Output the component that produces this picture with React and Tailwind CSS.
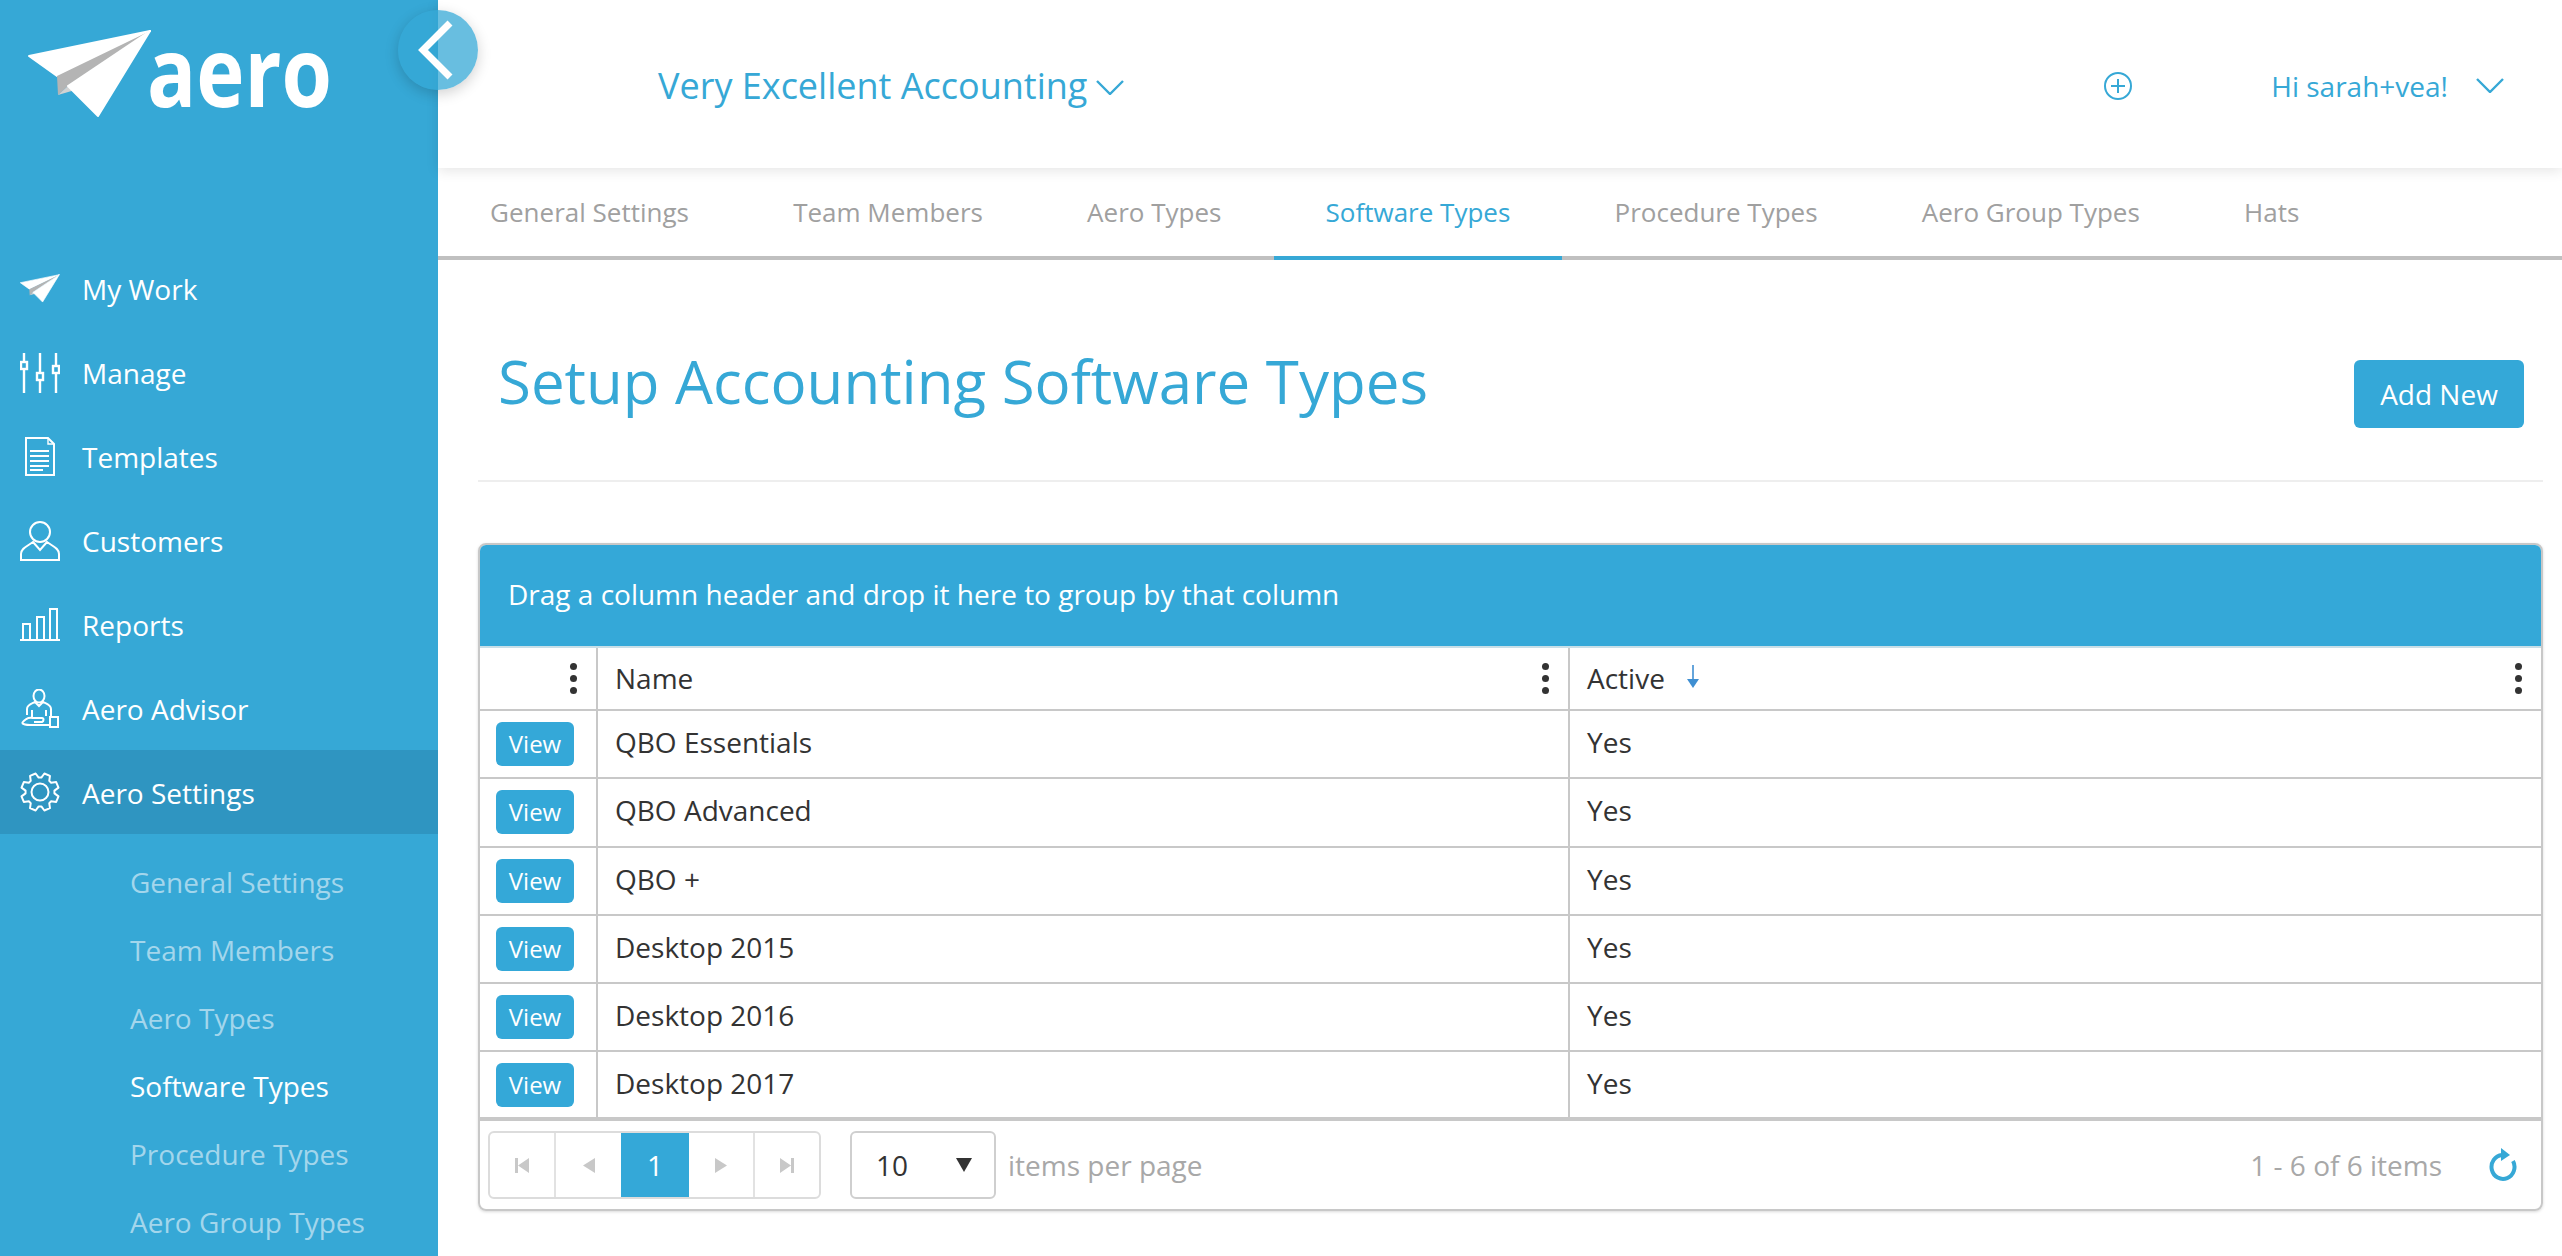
import React from "react";

// 8 tooth gear outline, centred on 20,20
const gearPath =
  Array.from({ length: 8 })
    .map((_, i) => {
      const a = (i * Math.PI) / 4 + Math.PI / 8;
      const pt = (r, d) => `${(20 + r * Math.cos(a + d)).toFixed(2)} ${(20 + r * Math.sin(a + d)).toFixed(2)}`;
      return `${i === 0 ? "M" : "L"}${pt(14.5, -0.3)} L${pt(19, -0.16)} L${pt(19, 0.16)} L${pt(14.5, 0.3)}`;
    })
    .join(" ") + " Z";

function Plane({ className }) {
  return (
    <svg viewBox="0 0 124 88" className={className}>
      <path d="M1 26 L122 1 L29 46 Z" fill="#fff" stroke="#fff" strokeWidth="2" strokeLinejoin="round" />
      <path d="M29 46 L122 1 L41 55 L30 65 Z" fill="#b4b4b4" />
      <path d="M30 65 L41 55 L47 60 Z" fill="#d2d2d2" />
      <path d="M40 56 L122 1 L70 86 Z" fill="#fff" stroke="#fff" strokeWidth="2" strokeLinejoin="round" />
    </svg>
  );
}

function ManageIcon() {
  return (
    <svg viewBox="0 0 40 40" className="w-10 h-10 mt-0.5" fill="none" stroke="#fff" strokeWidth="2.4">
      <path d="M4 0V9M4 16V40M20 0V20M20 27V40M36 0V13M36 20V40" />
      <rect x="1" y="9" width="6" height="7" fill="none" />
      <rect x="17" y="20" width="6" height="7" fill="none" />
      <rect x="33" y="13" width="6" height="7" fill="none" />
    </svg>
  );
}

function TemplatesIcon() {
  return (
    <svg viewBox="0 0 40 40" className="w-10 h-10 mt-0.5" fill="none" stroke="#fff" strokeWidth="2">
      <path d="M6 1H28L34 7V38H6Z" />
      <path d="M28 1V7H34" strokeWidth="1.4" />
      <path d="M10 14H29M10 19H29M10 24H29M10 29H29M10 33H23" />
    </svg>
  );
}

function CustomersIcon() {
  return (
    <svg viewBox="0 0 40 40" className="w-10 h-10 mt-0.5" fill="none" stroke="#fff" strokeWidth="2">
      <circle cx="20" cy="11" r="10" />
      <path d="M1 39V33C1 27 8 25 13 21L20 29L27 21C32 25 39 27 39 33V39Z" />
    </svg>
  );
}

function ReportsIcon() {
  return (
    <svg viewBox="0 0 40 34" className="w-10 h-[34px] mt-0.5" fill="none" stroke="#fff" strokeWidth="2">
      <path d="M0 32H40" />
      <path d="M3 32V16H10V32M17 32V9H24V32M30 32V1H37V32" />
    </svg>
  );
}

function AdvisorIcon() {
  return (
    <svg viewBox="0 0 40 40" className="w-10 h-10 mt-0.5" fill="none" stroke="#fff" strokeWidth="2">
      <ellipse cx="19" cy="7" rx="5.5" ry="6.5" />
      <path d="M7 26V20C7 16 11 15 15 13L19 17L23 13C27 15 31 16 31 20V27" />
      <path d="M12 21V29M26 21V27" />
      <path d="M2 34C5 30 9 28 13 29L22 29C24 29 24 32 22 33H14M30 28H38V38H30ZM30 36H10C7 36 4 36 2 34" />
    </svg>
  );
}

function GearIcon() {
  return (
    <svg viewBox="0 0 40 40" className="w-10 h-10" fill="none" stroke="#fff" strokeWidth="2" strokeLinejoin="round">
      <path d={gearPath} />
      <circle cx="20" cy="20" r="8.5" />
    </svg>
  );
}

function Nav({ icon, label, active }) {
  return (
    <div className={`flex items-center h-[84px] pl-5 gap-[22px] text-white ${active ? "bg-[#2f95c1]" : ""}`}>
      <div className="w-10 flex justify-center">{icon}</div>
      <span className="text-[28px] mt-0.5">{label}</span>
    </div>
  );
}

function Sidebar() {
  const subs = ["General Settings", "Team Members", "Aero Types", "Software Types", "Procedure Types", "Aero Group Types"];
  return (
    <aside className="w-[438px] shrink-0 h-full bg-[#36a8d6]">
      <div className="h-[246px] pl-7 pt-[30px] flex items-start">
        <Plane className="w-[124px] h-[88px] shrink-0" />
        <span className="text-[96px] leading-[84px] font-bold text-white -ml-[5px] mt-[-2px] origin-left scale-x-[0.85]">aero</span>
      </div>
      <Nav icon={<Plane className="w-10 h-[29px]" />} label="My Work" />
      <Nav icon={<ManageIcon />} label="Manage" />
      <Nav icon={<TemplatesIcon />} label="Templates" />
      <Nav icon={<CustomersIcon />} label="Customers" />
      <Nav icon={<ReportsIcon />} label="Reports" />
      <Nav icon={<AdvisorIcon />} label="Aero Advisor" />
      <Nav icon={<GearIcon />} label="Aero Settings" active />
      <div className="pt-[14px]">
        {subs.map((s) => (
          <div
            key={s}
            className={`h-[68px] pl-[130px] flex items-center text-[28px] ${s === "Software Types" ? "text-white" : "text-[#a3d6ec]"}`}
          >
            {s}
          </div>
        ))}
      </div>
    </aside>
  );
}

function Chevron({ className }) {
  return (
    <svg viewBox="0 0 28 15" className={className} fill="none" stroke="#36a8d6" strokeWidth="2.4">
      <path d="M1 1L14 14L27 1" />
    </svg>
  );
}

function Header() {
  return (
    <header className="relative z-10 h-[168px] flex items-center bg-white shadow-[0_3px_12px_rgba(0,0,0,0.1)] pl-[220px] pr-[58px] pt-[3px] text-[#36a8d6]">
      <span className="text-[36px]">Very Excellent Accounting</span>
      <Chevron className="w-7 h-[15px] ml-[9px] mt-1" />
      <svg viewBox="0 0 28 28" className="w-7 h-7 ml-auto" fill="none" stroke="#36a8d6" strokeWidth="2">
        <circle cx="14" cy="14" r="13" />
        <path d="M14 7V21M7 14H21" />
      </svg>
      <span className="text-[28px] ml-[139px]">Hi sarah+vea!</span>
      <Chevron className="w-7 h-[15px] ml-7" />
    </header>
  );
}

function Tabs() {
  const tabs = ["General Settings", "Team Members", "Aero Types", "Software Types", "Procedure Types", "Aero Group Types", "Hats"];
  return (
    <nav className="h-[92px] flex border-b-4 border-[#c0c0c0]">
      {tabs.map((t) => (
        <div
          key={t}
          className={`px-[52.1px] flex items-center text-[26px] ${
            t === "Software Types" ? "text-[#36a8d6] border-b-4 border-[#36a8d6] -mb-1" : "text-[#a0a0a0]"
          }`}
        >
          {t}
        </div>
      ))}
    </nav>
  );
}

function Kebab() {
  return (
    <div className="flex flex-col gap-[5px] shrink-0">
      <div className="w-[7px] h-[7px] rounded-full bg-[#333]"></div>
      <div className="w-[7px] h-[7px] rounded-full bg-[#333]"></div>
      <div className="w-[7px] h-[7px] rounded-full bg-[#333]"></div>
    </div>
  );
}

function Grid() {
  const rows = ["QBO Essentials", "QBO Advanced", "QBO +", "Desktop 2015", "Desktop 2016", "Desktop 2017"];
  const pagerBtn = "w-[66px] flex items-center justify-center border-r-2 border-[#e2e2e2]";
  return (
    <div className="mt-[61px] mr-[19px] border-2 border-[#c8c8c8] rounded-lg overflow-hidden shadow-[0_1px_3px_rgba(0,0,0,0.15)] text-[28px] text-[#333]">
      <div className="h-[103px] pb-[3px] bg-[#34a8d8] border-b-2 border-[#c8dfe8] flex items-center pl-7 text-white">
        Drag a column header and drop it here to group by that column
      </div>
      <div className="grid grid-cols-[118px_972px_1fr] h-[63px] border-b-2 border-[#c8c8c8]">
        <div className="border-r-2 border-[#c8c8c8] flex items-center justify-end pr-[19px]">
          <Kebab />
        </div>
        <div className="border-r-2 border-[#c8c8c8] flex items-center justify-between pl-[17px] pr-[19px]">
          <span className="pb-0.5">Name</span>
          <Kebab />
        </div>
        <div className="flex items-center pl-[17px] pr-[19px]">
          <span className="pb-0.5">Active</span>
          <svg viewBox="0 0 14 24" className="w-3.5 h-6 ml-[21px] mb-1">
            <path d="M7 0V16" stroke="#3f8fd2" strokeWidth="1.6" />
            <path d="M1 14H13L7 23Z" fill="#3f8fd2" />
          </svg>
          <div className="ml-auto">
            <Kebab />
          </div>
        </div>
      </div>
      {rows.map((name, i) => (
        <div
          key={name}
          className={`grid grid-cols-[118px_972px_1fr] ${i === 5 ? "h-[69px] border-b-4" : "h-[68.3px] border-b-2"} border-[#c8c8c8]`}
        >
          <div className="border-r-2 border-[#c8c8c8] flex items-center pl-4">
            <button className="w-[78px] h-11 rounded-md bg-[#34a8d8] text-white text-[24px]">View</button>
          </div>
          <div className="border-r-2 border-[#c8c8c8] flex items-center pl-[17px] pb-1">{name}</div>
          <div className="flex items-center pl-[17px] pb-1">Yes</div>
        </div>
      ))}
      <div className="h-[88px] flex items-center pl-2 pr-6 text-[#a8a8a8]">
        <div className="flex h-[68px] border-2 border-[#dcdcdc] rounded-md overflow-hidden">
          <div className={pagerBtn}>
            <svg viewBox="0 0 14 15" className="w-3.5 h-[15px]"><path d="M0 0H3V15H0ZM14 0V15L3 7.5Z" fill="#c8c8c8" /></svg>
          </div>
          <div className="w-[65px] flex items-center justify-center">
            <svg viewBox="0 0 12 15" className="w-3 h-[15px]"><path d="M12 0V15L0 7.5Z" fill="#c8c8c8" /></svg>
          </div>
          <div className="w-[68px] bg-[#34a8d8] text-white flex items-center justify-center text-[28px] -my-0.5">1</div>
          <div className={pagerBtn}>
            <svg viewBox="0 0 12 15" className="w-3 h-[15px]"><path d="M0 0V15L12 7.5Z" fill="#c8c8c8" /></svg>
          </div>
          <div className="w-[64px] flex items-center justify-center">
            <svg viewBox="0 0 14 15" className="w-3.5 h-[15px]"><path d="M11 0H14V15H11ZM0 0V15L11 7.5Z" fill="#c8c8c8" /></svg>
          </div>
        </div>
        <div className="w-[146px] h-[68px] ml-[29px] border-2 border-[#cfcfcf] rounded-md flex items-center pl-6 text-[#333] text-[28px]">
          10
          <svg viewBox="0 0 16 14" className="w-4 h-3.5 ml-auto mr-[22px]"><path d="M0 0H16L8 14Z" fill="#333" /></svg>
        </div>
        <span className="ml-3">items per page</span>
        <span className="ml-auto">1 - 6 of 6 items</span>
        <svg viewBox="0 0 30 34" className="w-[30px] h-[34px] ml-[45px]" fill="none">
          <path d="M15 7A11.5 12 0 1 0 26 13" stroke="#36a8d6" strokeWidth="4" />
          <path d="M14 0L23 7L14 13Z" fill="#36a8d6" />
        </svg>
      </div>
    </div>
  );
}

export default function App() {
  return (
    <div className="relative flex h-[1256px] w-[2562px] overflow-hidden bg-white font-['Open_Sans',sans-serif]">
      <Sidebar />
      <main className="flex-1 min-w-0 flex flex-col">
        <Header />
        <Tabs />
        <div className="pl-10">
          <div className="h-[222px] pt-[81px] pl-5 pr-[19px] mr-[19px] flex items-start justify-between border-b-2 border-[#eeeeee]">
            <h1 className="text-[60px] leading-[80px] text-[#36a8d6]">Setup Accounting Software Types</h1>
            <button className="w-[170px] h-[68px] mt-[19px] rounded-md bg-[#34a8d8] text-white text-[28px]">Add New</button>
          </div>
          <Grid />
        </div>
      </main>
      <button className="absolute z-20 left-[398px] top-[10px] w-20 h-20 rounded-full bg-[#36a8d6]/75 shadow-[0_4px_14px_rgba(0,0,0,0.18)] flex items-center justify-center">
        <svg viewBox="0 0 36 60" className="w-9 h-[60px] -ml-[4px]" fill="none" stroke="#fff" strokeWidth="7">
          <path d="M32 3L5 30L32 57" />
        </svg>
      </button>
    </div>
  );
}
